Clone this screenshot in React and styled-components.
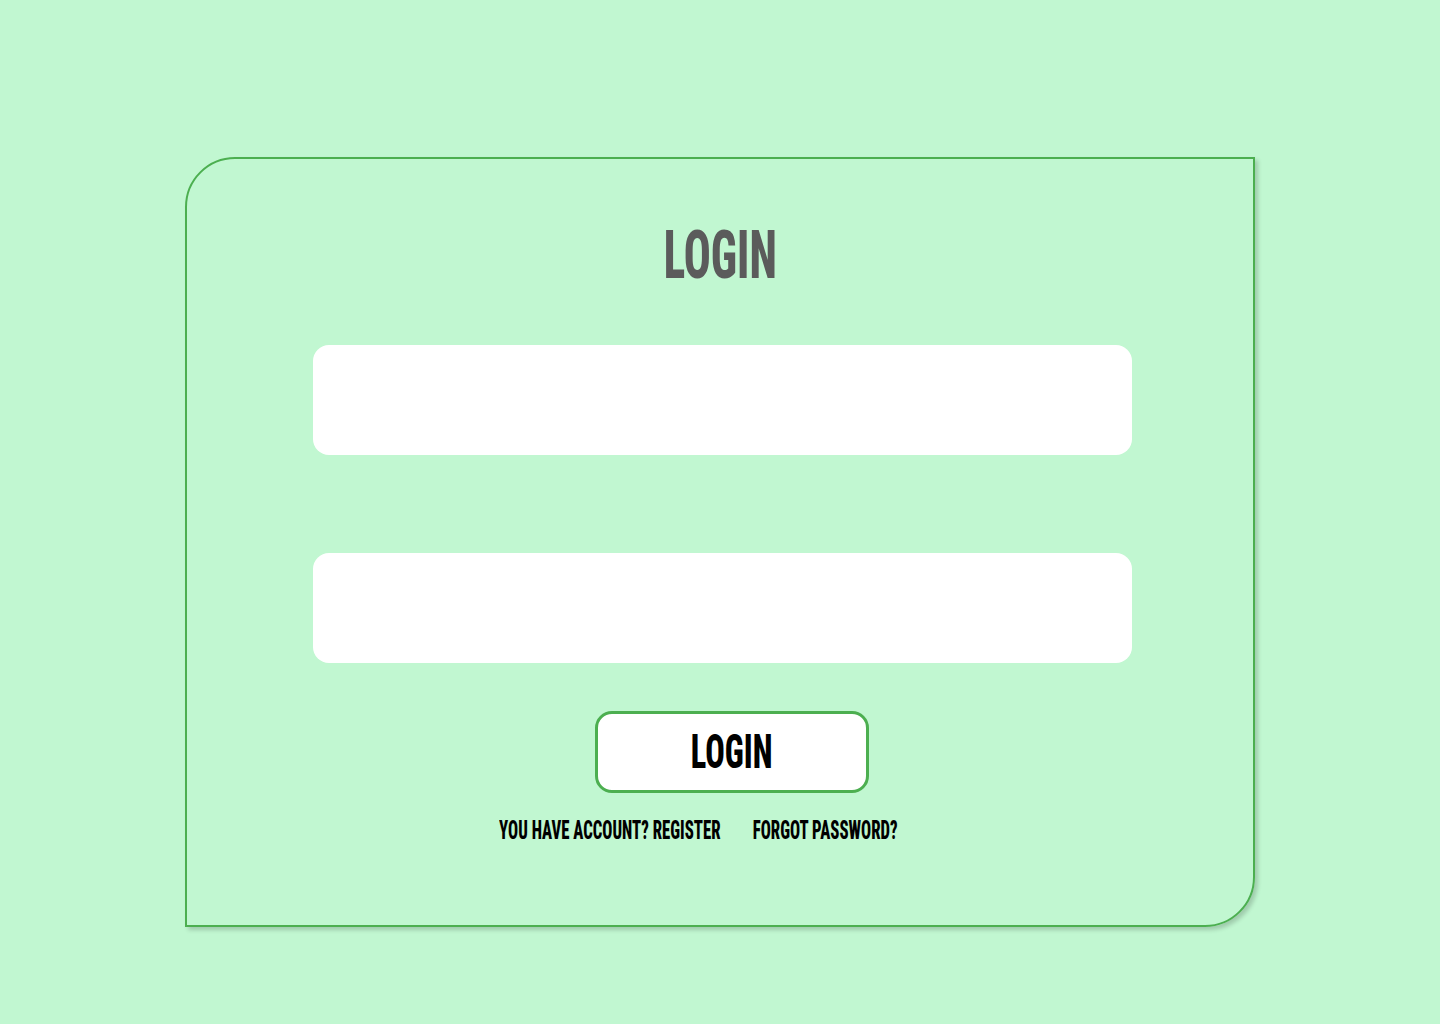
import React from "react";
import styled, { createGlobalStyle } from "styled-components";

const GlobalStyle = createGlobalStyle`
    html, body {
        margin: 0;
        padding: 0;
        background: #c1f7d1;
        font-family: Roboto, "Open Sans", sans-serif;
    }
`;

const Page = styled.div`
    min-height: 1024px;
    display: flex;
    justify-content: center;
    align-items: flex-start;
    padding-top: 157px;
    box-sizing: border-box;
`;

const Card = styled.form`
    width: 1070px;
    height: 770px;
    box-sizing: border-box;
    border: 2px solid #4caf50;
    border-radius: 50px 0 50px 0;
    box-shadow: 3px 3px 4px rgba(0, 0, 0, 0.18);
    display: flex;
    flex-direction: column;
    align-items: center;
    padding-top: 61px;
`;

// narrow display lettering, squeezed a bit further than the font's own condensed cut
const Narrow = styled.span`
    display: inline-block;
    font-stretch: 75%;
    font-weight: 800;
    transform: scaleX(${(props) => props.$k || 0.66});
    transform-origin: center;
    white-space: nowrap;
`;

const Title = styled.h1`
    margin: 0;
    font-size: 67.5px;
    line-height: 70px;
    font-weight: 800;
    color: #5b5b5b;
`;

const Input = styled.input`
    width: 819px;
    height: 110px;
    box-sizing: border-box;
    border: none;
    border-radius: 16px;
    background: #fff;
    margin-top: ${(props) => props.$top}px;
    margin-left: 5px;
    outline: none;
`;

const Button = styled.button`
    width: 274px;
    height: 82px;
    margin-top: 48px;
    margin-left: 24px;
    box-sizing: border-box;
    display: flex;
    align-items: center;
    justify-content: center;
    background: #fff;
    border: 3px solid #4caf50;
    border-radius: 17px;
    font-family: inherit;
    font-size: 48px;
    line-height: 1;
    color: #000;
    cursor: pointer;
`;

const Links = styled(Narrow)`
    display: flex;
    gap: 48px;
    margin-top: 23px;
    margin-right: 44px;
    font-size: 25px;
    line-height: 30px;
`;

const TextLink = styled.a`
    color: #000;
    text-decoration: none;
`;

const App = () => {
    return (
        <>
            <GlobalStyle />
            <Page>
                <Card onSubmit={(e) => e.preventDefault()}>
                    <Title>
                        <Narrow $k={0.664}>LOGIN</Narrow>
                    </Title>
                    <Input type="text" $top={55} />
                    <Input type="password" $top={98} />
                    <Button type="submit">
                        <Narrow $k={0.675}>LOGIN</Narrow>
                    </Button>
                    <Links as="div" $k={0.67}>
                        <TextLink href="#">YOU HAVE ACCOUNT? REGISTER</TextLink>
                        <TextLink href="#">FORGOT PASSWORD?</TextLink>
                    </Links>
                </Card>
            </Page>
        </>
    );
};

export default App;
